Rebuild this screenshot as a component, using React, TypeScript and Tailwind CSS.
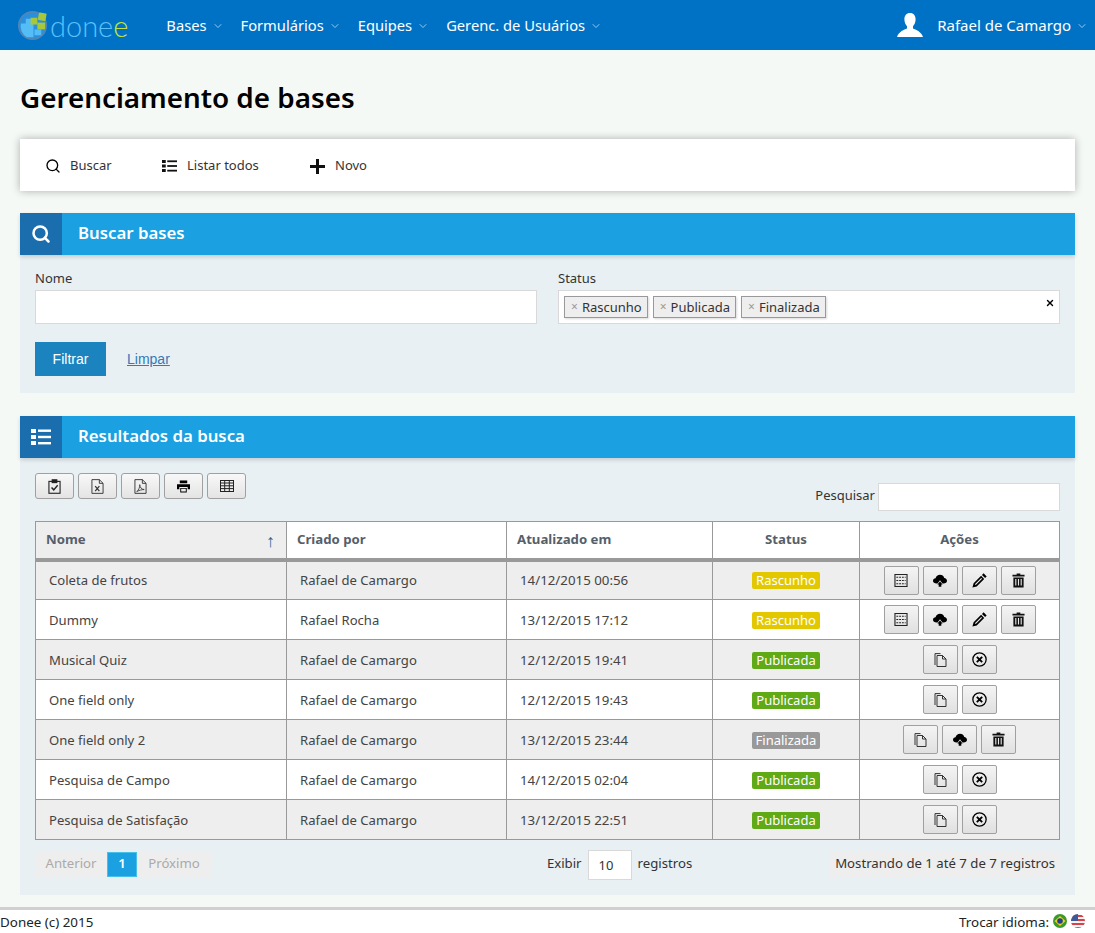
import { ChevronDown, Search, X } from 'lucide-react';
import type { ReactNode } from 'react';

const FONT = 'font-["Noto_Sans",sans-serif]';

type IconProps = { className?: string };

const ListIcon = ({ className = '' }: IconProps) => (
  <svg viewBox="0 0 20 16" className={className} fill="currentColor">
    <rect x="0" y="0" width="5" height="4" />
    <rect x="0" y="6" width="5" height="4" />
    <rect x="0" y="12" width="5" height="4" />
    <rect x="7" y="0.5" width="13" height="2.4" />
    <rect x="7" y="6.8" width="13" height="2.4" />
    <rect x="7" y="13" width="13" height="2.4" />
  </svg>
);

const PlusIcon = () => (
  <svg viewBox="0 0 15 15" className="h-[15px] w-[15px]" fill="#111">
    <path d="M6 0h3v6h6v3H9v6H6V9H0V6h6z" />
  </svg>
);

const UserIcon = ({ className = '' }: IconProps) => (
  <svg viewBox="0 0 26 24" className={className} fill="currentColor">
    <path d="M13 0c3.600 0 5.600 2.600 5.600 6.200 0 2.800-1 5.400-2.600 7v2.200c2.600 1.200 8.200 2.800 10 8.600H0c1.800-5.800 7.400-7.400 10-8.600v-2.200c-1.600-1.600-2.600-4.200-2.600-7C7.400 2.600 9.400 0 13 0z" />
  </svg>
);

const ClipboardIcon = () => (
  <svg viewBox="0 0 14 16" className="h-[15px] w-[13px]" fill="none" stroke="#222" strokeWidth="1.2">
    <rect x="1" y="2.500" width="12" height="12.800" />
    <rect x="4.500" y="0.800" width="5" height="3" fill="#222" />
    <path d="M3.800 9l2.400 2.600 4.200-5" strokeWidth="1.500" />
  </svg>
);

const ExcelIcon = () => (
  <svg viewBox="0 0 14 16" className="h-[15px] w-[13px]" fill="none" stroke="#333" strokeWidth="1">
    <path d="M1 .6h8l4 4v10.800H1z" />
    <path d="M9 .6v4h4" />
    <path d="M4.500 7.500l4.500 5.500M9 7.500l-4.500 5.500" strokeWidth="1.300" />
  </svg>
);

const PdfIcon = () => (
  <svg viewBox="0 0 14 16" className="h-[15px] w-[13px]" fill="none" stroke="#333" strokeWidth="1">
    <path d="M1 .6h8l4 4v10.800H1z" />
    <path d="M9 .6v4h4" />
    <path d="M3 13.500c2-1.500 3.500-5 3.200-7.500 0 3 2 5 4.800 5.300-2.500 0-5.500.7-8 2.200z" strokeWidth=".9" />
  </svg>
);

const PrintIcon = () => (
  <svg viewBox="0 0 14 14" className="h-[13px] w-[13px]" fill="#000">
    <rect x="3" y="0.500" width="8" height="3" />
    <path d="M0 4.500h14v5.500h-2.500V7.500h-9V10H0z" />
    <path d="M3.500 8.500h7v5h-7zm1 1v3h5v-3z" />
  </svg>
);

const TableIcon = () => (
  <svg viewBox="0 0 14 12" className="h-[12px] w-[14px]" fill="none" stroke="#222" strokeWidth="1">
    <rect x="0.500" y="0.500" width="13" height="11" />
    <path d="M0 3h14M0 5.800h14M0 8.600h14M4.700 1v11M9.300 1v11" />
  </svg>
);

const FormIcon = () => (
  <svg viewBox="0 0 14 14" className="h-[13px] w-[14px]" fill="none" stroke="#222" strokeWidth="1">
    <rect x="0.500" y="0.500" width="13" height="13" strokeWidth="1.200" />
    <path d="M2 3.500h10M2 7h10M2 10.500h10" strokeDasharray="2 1" strokeWidth="1.300" />
  </svg>
);

const CloudIcon = () => (
  <svg viewBox="0 0 16 14" className="h-[13px] w-[14px]" fill="#000">
    <path d="M4 10.500C1.800 10.500 0 9.300 0 7.300c0-1.800 1.300-2.900 2.900-3C3.500 2 5.500.5 8 .5c2.400 0 4.200 1.400 4.900 3.600 1.700.2 3.100 1.400 3.100 3.200 0 2-1.800 3.200-3.900 3.200h-1.300L8 6.800 5.200 10.500z" />
    <path d="M8 8.200l3 3.500H9.500V14h-3v-2.300H5z" />
  </svg>
);

const PencilIcon = () => (
  <svg viewBox="0 0 14 14" className="h-[15px] w-[15px]" fill="#000">
    <path d="M10.800.3l2.900 2.900-1.500 1.500-2.900-2.900z" />
    <path d="M8.500 2.600l2.900 2.900-7 7L.4 13.600l1.100-4zM8.600 4.600L2.700 10.500l.8.8 5.900-5.900z" />
  </svg>
);

const TrashIcon = () => (
  <svg viewBox="0 0 14 15" className="h-[15px] w-[13px]" fill="#111">
    <path d="M5 0h4v1.200h4.500V3.300H.5V1.200H5z" />
    <path d="M1.500 4.300h11V15h-11zm2 1.700v7h1.200V6zm2.900 0v7h1.200V6zm2.900 0v7h1.200V6z" />
  </svg>
);

const CopyIcon = () => (
  <svg viewBox="0 0 13 14" className="h-[14px] w-[13px]" fill="none" stroke="#333" strokeWidth="1">
    <path d="M1 12V.6h5.500" />
    <path d="M3 2.500h5.500L12 6v7.500H3z" />
    <path d="M8.500 2.500V6H12" />
  </svg>
);

const CancelIcon = () => (
  <svg viewBox="0 0 14 14" className="h-[15px] w-[15px]" fill="none" stroke="#000">
    <circle cx="7" cy="7" r="6.200" strokeWidth="1.200" />
    <path d="M4.500 4.500l5 5M9.500 4.500l-5 5" strokeWidth="1.800" />
  </svg>
);

const BrazilFlag = () => (
  <svg viewBox="0 0 14 14" className="h-[14px] w-[14px]">
    <circle cx="7" cy="7" r="7" fill="#3c9a2c" />
    <path d="M7 2l5.500 5L7 12 1.500 7z" fill="#f0d020" />
    <circle cx="7" cy="7" r="2.800" fill="#1f3f8f" />
  </svg>
);

const UsFlag = () => (
  <svg viewBox="0 0 14 14" className="h-[14px] w-[14px]">
    <clipPath id="us-flag">
      <circle cx="7" cy="7" r="7" />
    </clipPath>
    <g clipPath="url(#us-flag)">
      <rect width="14" height="14" fill="#f4f4f4" />
      <path d="M0 1h14v2H0zM0 5h14v2H0zM0 9h14v2H0zM0 13h14v2H0z" fill="#d8404a" />
      <rect width="7" height="7" fill="#3c5a9a" />
    </g>
  </svg>
);

const Logo = () => (
  <div className="flex items-center">
    <svg viewBox="0 0 32 32" className="h-[31px] w-[31px]">
      <circle cx="15" cy="16" r="14" fill="#2a8fdc" stroke="#4f86b8" strokeWidth="2" />
      <path d="M3 14h13v14H9a13 13 0 0 1-6-14z" fill="#55bdf5" />
      <path d="M8 9h7v6H8zM17 20h7v6h-7z" fill="#55bdf5" />
      <rect x="13" y="8" width="7" height="7" fill="#a8c83a" />
      <rect x="21" y="3" width="8" height="8" rx="1" fill="#a8c83a" transform="rotate(10 25 7)" />
      <rect x="20" y="13" width="8" height="7" fill="#a8c83a" />
    </svg>
    <span className="ml-[1px] font-['Lato',sans-serif] text-[29px] leading-none font-light text-[#5cc0fa]">
      done
      <span className="text-[#c4e33a]">e</span>
    </span>
  </div>
);

const NavItem = ({ label, size = 'text-[14.7px]' }: { label: string; size?: string }) => (
  <div className={`flex items-center gap-[5px] text-white ${size}`}>
    <span className="pt-[1px]">{label}</span>
    <ChevronDown className="mt-[2px] h-3 w-3 opacity-80" strokeWidth={1.5} />
  </div>
);

const Panel = ({ title, icon, children }: { title: string; icon: ReactNode; children: ReactNode }) => (
  <section className="bg-[#e8f0f4]">
    <div className="flex h-[42px] items-center bg-[#1ba1e2] shadow-[0_2px_4px_rgba(0,0,0,0.15)]">
      <div className="flex h-full w-[42px] items-center justify-center bg-[#1b6eae] text-white">{icon}</div>
      <h2 className="mb-[2px] ml-4 text-[16.8px] font-semibold text-white">{title}</h2>
    </div>
    {children}
  </section>
);

const Tag = ({ label }: { label: string }) => (
  <span className="flex h-[22px] items-center border border-[#999] bg-[#eeeeee] pr-[5px] pl-[6px] text-[13px] leading-none text-[#333] shadow-[1px_1px_2px_rgba(0,0,0,0.15)]">
    <span className="mr-[4px] text-[12px] text-[#999]">×</span>
    <span className="pt-[1px]">{label}</span>
  </span>
);

const SmallButton = ({ children }: { children: ReactNode }) => (
  <button className="flex h-[26px] w-[39px] items-center justify-center rounded-[3px] border border-[#a0a0a0] bg-gradient-to-b from-[#f8f8f8] to-[#e4e4e4]">
    {children}
  </button>
);

const ActionButton = ({ children }: { children: ReactNode }) => (
  <button className="flex h-[29px] w-[35px] items-center justify-center rounded-[2px] border border-[#a0a0a0] bg-gradient-to-b from-[#f4f4f4] to-[#e0e0e0]">
    {children}
  </button>
);

const STATUS_COLORS: Record<string, string> = {
  Rascunho: 'bg-[#e3c800]',
  Publicada: 'bg-[#60a917]',
  Finalizada: 'bg-[#999999]',
};

const draftActions = [<FormIcon key="f" />, <CloudIcon key="c" />, <PencilIcon key="p" />, <TrashIcon key="t" />];
const publishedActions = [<CopyIcon key="c" />, <CancelIcon key="x" />];
const finishedActions = [<CopyIcon key="c" />, <CloudIcon key="u" />, <TrashIcon key="t" />];

const rows = [
  { name: 'Coleta de frutos', author: 'Rafael de Camargo', updated: '14/12/2015 00:56', status: 'Rascunho', actions: draftActions },
  { name: 'Dummy', author: 'Rafael Rocha', updated: '13/12/2015 17:12', status: 'Rascunho', actions: draftActions },
  { name: 'Musical Quiz', author: 'Rafael de Camargo', updated: '12/12/2015 19:41', status: 'Publicada', actions: publishedActions },
  { name: 'One field only', author: 'Rafael de Camargo', updated: '12/12/2015 19:43', status: 'Publicada', actions: publishedActions },
  { name: 'One field only 2', author: 'Rafael de Camargo', updated: '13/12/2015 23:44', status: 'Finalizada', actions: finishedActions },
  { name: 'Pesquisa de Campo', author: 'Rafael de Camargo', updated: '14/12/2015 02:04', status: 'Publicada', actions: publishedActions },
  { name: 'Pesquisa de Satisfação', author: 'Rafael de Camargo', updated: '13/12/2015 22:51', status: 'Publicada', actions: publishedActions },
];

export default function App() {
  return (
    <div className={`flex min-h-[933px] flex-col bg-[#f5f9f6] ${FONT} text-[#333]`}>
      {/* Top navigation */}
      <nav className="flex h-[50px] items-center justify-between bg-[#0072c6] pr-[7px] pl-[18px]">
        <div className="flex items-center">
          <Logo />
          <div className="ml-[38px] flex items-center gap-[17px]">
            <NavItem label="Bases" />
            <NavItem label="Formulários" />
            <NavItem label="Equipes" />
            <NavItem label="Gerenc. de Usuários" />
          </div>
        </div>
        <div className="flex items-center gap-[14px]">
          <UserIcon className="h-[24px] w-[26px] text-white" />
          <NavItem label="Rafael de Camargo" size="text-[15px]" />
        </div>
      </nav>

      <main className="flex-1 px-5">
        <h1 className="mt-[27px] text-[27.8px] leading-[40px] font-semibold text-black">Gerenciamento de bases</h1>

        {/* Toolbar */}
        <div className="mt-[22px] flex h-[52px] items-center bg-white pt-[2px] pl-[25px] text-[13px] text-[#333] shadow-[0_0_8px_rgba(0,0,0,0.3)]">
          <div className="flex w-[117px] items-center gap-[9px]">
            <Search className="h-[16px] w-[16px] text-black" strokeWidth={2} />
            Buscar
          </div>
          <div className="flex w-[148px] items-center gap-[10px]">
            <ListIcon className="h-[14px] w-[15px] text-[#111]" />
            Listar todos
          </div>
          <div className="flex items-center gap-[10px]">
            <PlusIcon />
            Novo
          </div>
        </div>

        {/* Search panel */}
        <div className="mt-[22px]">
          <Panel title="Buscar bases" icon={<Search className="h-[20px] w-[20px]" strokeWidth={3} />}>
            <div className="h-[138px] px-[15px] pt-[15px]">
              <div className="grid grid-cols-2 gap-[21px]">
                <div>
                  <label className="block text-[13px] leading-[17px]">Nome</label>
                  <input className="mt-[3px] block h-[34px] w-full border border-[#d9d9d9] bg-white" />
                </div>
                <div>
                  <label className="block text-[13px] leading-[17px]">Status</label>
                  <div className="relative mt-[3px] flex h-[34px] items-start gap-[5px] border border-[#d9d9d9] bg-white pt-[5px] pl-[5px]">
                    <Tag label="Rascunho" />
                    <Tag label="Publicada" />
                    <Tag label="Finalizada" />
                    <X className="absolute top-[7px] right-[4px] h-[10px] w-[10px] text-black" strokeWidth={3.5} />
                  </div>
                </div>
              </div>
              <div className="mt-[18px] flex items-center gap-[21px] font-['Liberation_Sans',sans-serif] text-[14px]">
                <button className="h-[34px] w-[71px] bg-[#1b84bf] text-white">Filtrar</button>
                <a className="text-[#337ab7] underline">Limpar</a>
              </div>
            </div>
          </Panel>
        </div>

        {/* Results panel */}
        <div className="mt-[23px]">
          <Panel title="Resultados da busca" icon={<ListIcon className="h-[16px] w-[20px]" />}>
            <div className="px-[15px] pt-[15px] pb-[16px]">
              <div className="flex h-[48px] items-start justify-between">
                <div className="flex gap-[4px]">
                  <SmallButton><ClipboardIcon /></SmallButton>
                  <SmallButton><ExcelIcon /></SmallButton>
                  <SmallButton><PdfIcon /></SmallButton>
                  <SmallButton><PrintIcon /></SmallButton>
                  <SmallButton><TableIcon /></SmallButton>
                </div>
                <div className="mt-[10px] flex items-center gap-[3px] text-[13px]">
                  <span className="mb-[2px]">Pesquisar</span>
                  <input className="h-[28px] w-[182px] border border-[#d9d9d9] bg-white" />
                </div>
              </div>

              <table className="w-[1024px] table-fixed border-collapse border border-[#999] text-[13.1px]">
                <colgroup>
                  <col className="w-[251px]" />
                  <col className="w-[220px]" />
                  <col className="w-[206px]" />
                  <col className="w-[147px]" />
                  <col className="w-[200px]" />
                </colgroup>
                <thead>
                  <tr className="h-[38px] text-[13.2px] text-[#555f6b]">
                    <th className="border-r border-b-[4px] border-[#999] bg-[#eeeeee] pr-[11px] pl-[10px] text-left font-bold">
                      <div className="flex items-center justify-between">
                        Nome
                        <span className="text-[18px] leading-none font-normal text-[#2a5f8f]">↑</span>
                      </div>
                    </th>
                    <th className="border-r border-b-[4px] border-[#999] bg-white px-[10px] text-left font-bold">Criado por</th>
                    <th className="border-r border-b-[4px] border-[#999] bg-white px-[10px] text-left font-bold">Atualizado em</th>
                    <th className="border-r border-b-[4px] border-[#999] bg-white text-center font-bold">Status</th>
                    <th className="border-b-[4px] border-[#999] bg-white text-center font-bold">Ações</th>
                  </tr>
                </thead>
                <tbody>
                  {rows.map((row, i) => (
                    <tr key={row.name} className={`h-[40px] border-b border-[#999] ${i % 2 === 0 ? 'bg-[#eeeeee]' : 'bg-white'}`}>
                      <td className="border-r border-[#999] pt-[2px] pl-[13px] text-[#444]">{row.name}</td>
                      <td className="border-r border-[#999] pt-[2px] pl-[13px] text-[#444]">{row.author}</td>
                      <td className="border-r border-[#999] pt-[2px] pl-[13px] text-[13.3px] text-[#444]">{row.updated}</td>
                      <td className="border-r border-[#999] pt-[2px] text-center">
                        <span className={`inline-block h-[17px] rounded-[2px] px-[4px] text-[13px] leading-[17px] text-white ${STATUS_COLORS[row.status]}`}>
                          {row.status}
                        </span>
                      </td>
                      <td>
                        <div className="flex justify-center gap-[4px]">
                          {row.actions.map((icon) => (
                            <ActionButton key={icon.key}>{icon}</ActionButton>
                          ))}
                        </div>
                      </td>
                    </tr>
                  ))}
                </tbody>
              </table>

              {/* Pagination */}
              <div className="mt-[9px] flex h-[30px] items-center justify-between text-[13.2px]">
                <div className="flex h-[25px] w-[176px] items-center bg-[#eeeeee] text-[#aaa]">
                  <span className="w-[72px] text-center">Anterior</span>
                  <span className="flex h-[25px] w-[30px] items-center justify-center border border-[#45c0e8] bg-[#1ba1e2] font-semibold text-white">1</span>
                  <span className="flex-1 text-center">Próximo</span>
                </div>
                <div className="ml-[198px] flex items-center gap-[6px]">
                  Exibir
                  <input readOnly value="10" className="mt-[2px] h-[30px] w-[44px] border border-[#d9d9d9] bg-white pl-[10px] text-[13px]" />
                  registros
                </div>
                <div className="bg-[#eeeeee] px-[5px] py-[3px]">Mostrando de 1 até 7 de 7 registros</div>
              </div>
            </div>
          </Panel>
        </div>
      </main>

      {/* Footer */}
      <footer className="mt-[12px] flex h-[26px] items-center justify-between border-t-[3px] border-[#d0d0d0] bg-white pr-[10px] text-[13.4px] text-[#222]">
        <span className="pt-[2px]">Donee (c) 2015</span>
        <div className="flex items-center gap-[4px]">
          <span className="pt-[2px]">Trocar idioma:</span>
          <BrazilFlag />
          <UsFlag />
        </div>
      </footer>
    </div>
  );
}
